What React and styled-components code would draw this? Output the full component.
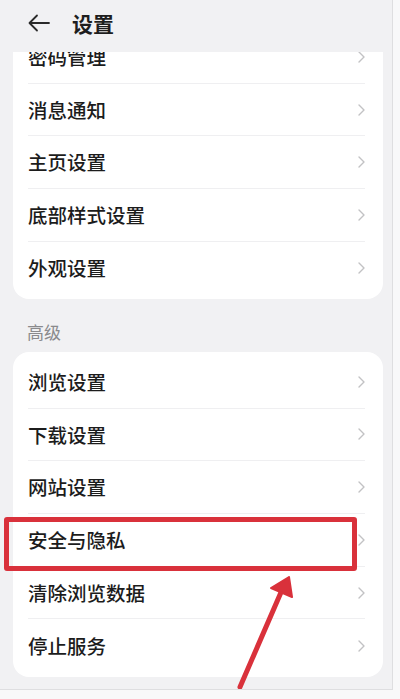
import React from 'react';
import styled, {createGlobalStyle} from "styled-components";

const GlobalStyle = createGlobalStyle`
  html, body {
    margin: 0;
    padding: 0;
    background: #f8f8f9;
  }
  body {
    font-family: "Noto Sans CJK SC", "Noto Sans", sans-serif;
    color: #222;
  }
`

const Phone = styled.div`
  position: relative;
  width: 392px;
  height: 689px;
  background: #f1f1f3;
  border-right: 1px solid #dedee0;
  border-bottom: 1px solid #dedee0;
  overflow: hidden;
  display: flex;
  flex-direction: column;
`

const Header = styled.div`
  position: relative;
  z-index: 2;
  flex: 0 0 52px;
  display: flex;
  align-items: center;
  gap: 22px;
  padding-left: 28px;
  background: #f1f1f3;
  h1 {
    margin: 0;
    font-size: 21px;
    font-weight: 600;
    line-height: 1;
    color: #1e1e1e;
    padding-bottom: 6px;
  }
  svg {
    margin-bottom: 6px;
  }
`

const Scroll = styled.div`
  flex: 1;
  overflow: hidden;
`

// list is scrolled a little, first row sits half under the header
const ScrollInner = styled.div`
  margin-top: -25px;
`

const Card = styled.div`
  background: #fff;
  border-radius: 16px;
  margin: 0 9px 0 13px;
  padding: 4px 0 4.5px;
`

const Row = styled.div`
  height: 52.7px;
  display: flex;
  align-items: center;
  justify-content: space-between;
  margin: 0 18px 0 15px;
  box-sizing: border-box;
  border-bottom: ${props => props.last ? 'none' : '1px solid #efeff1'};
  font-size: 19.5px;
  font-weight: 500;
  color: #1c1c1c;
  span {
    line-height: 1;
  }
`

const SectionTitle = styled.div`
  padding: 22px 0 9px 27px;
  font-size: 17px;
  line-height: 22px;
  color: #8a8a8c;
`

const HighlightBox = styled.div`
  position: absolute;
  left: 4px;
  top: 517px;
  width: 353px;
  height: 54px;
  box-sizing: border-box;
  border: 5px solid #d9313b;
  border-radius: 3px;
  z-index: 3;
`

const ArrowLayer = styled.svg`
  position: absolute;
  left: 0;
  top: 0;
  z-index: 3;
  pointer-events: none;
`

const Chevron = () => (
    <svg width="7" height="12" viewBox="0 0 7 12">
        <polyline points="1,1 6,6 1,11" fill="none" stroke="#c2c2c4" strokeWidth="1.4"
                  strokeLinecap="round" strokeLinejoin="round"/>
    </svg>
)

const BackArrow = () => (
    <svg width="22" height="18" viewBox="0 0 22 18">
        <path d="M21 9H2 M9 1.5L1.5 9L9 16.5" fill="none" stroke="#2a2a2a" strokeWidth="1.8"
              strokeLinecap="round" strokeLinejoin="round"/>
    </svg>
)

const general = ['密码管理', '消息通知', '主页设置', '底部样式设置', '外观设置'];
const advanced = ['浏览设置', '下载设置', '网站设置', '安全与隐私', '清除浏览数据', '停止服务'];

const List = ({items}) => (
    <Card>
        {items.map((item, i) => (
            <Row key={item} last={i === items.length - 1}>
                <span>{item}</span>
                <Chevron/>
            </Row>
        ))}
    </Card>
)

const App = () => {
    return (
        <>
            <GlobalStyle/>
            <Phone>
                <Header>
                    <BackArrow/>
                    <h1>设置</h1>
                </Header>
                <Scroll>
                    <ScrollInner>
                        <List items={general}/>
                        <SectionTitle>高级</SectionTitle>
                        <List items={advanced}/>
                    </ScrollInner>
                </Scroll>
                <HighlightBox/>
                <ArrowLayer width="392" height="689" viewBox="0 0 392 689">
                    <line x1="240" y1="687" x2="282" y2="590" stroke="#d9313b" strokeWidth="5"
                          strokeLinecap="round"/>
                    <polygon points="289,577 271,588 292,597" fill="#d9313b" stroke="#d9313b"
                             strokeWidth="2" strokeLinejoin="round"/>
                </ArrowLayer>
            </Phone>
        </>
    );
};

export default App;
